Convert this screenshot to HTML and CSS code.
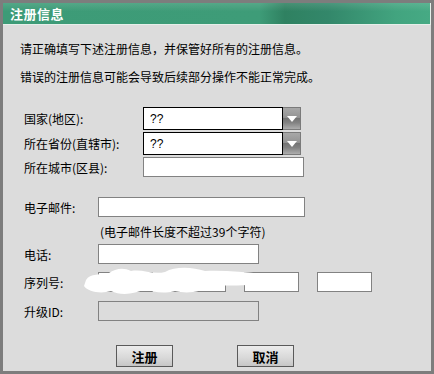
FILE: index.html
```html
<!DOCTYPE html>
<html lang="zh-CN">
<head>
    <meta charset="UTF-8">
    <title>注册信息</title>
    <link rel="stylesheet" href="styles.css">
</head>
<body>

<div class="window">
    <div class="title-bar">注册信息</div>

    <div class="content">
        <p class="intro">请正确填写下述注册信息，并保管好所有的注册信息。</p>
        <p class="intro second">错误的注册信息可能会导致后续部分操作不能正常完成。</p>

        <div class="location">
            <div class="row">
                <label class="label-wide">国家(地区):</label>
                <div class="select">
                    <span class="select-value">??</span>
                    <span class="select-btn"></span>
                </div>
            </div>
            <div class="row">
                <label class="label-wide">所在省份(直辖市):</label>
                <div class="select">
                    <span class="select-value">??</span>
                    <span class="select-btn"></span>
                </div>
            </div>
            <div class="row">
                <label class="label-wide">所在城市(区县):</label>
                <input type="text" class="field city">
            </div>
        </div>

        <div class="contact">
            <div class="row">
                <label class="label">电子邮件:</label>
                <input type="text" class="field email">
            </div>
            <p class="hint">(电子邮件长度不超过39个字符)</p>
            <div class="row phone-row">
                <label class="label">电话:</label>
                <input type="text" class="field phone">
            </div>
            <div class="row serial-row">
                <label class="label">序列号:</label>
                <div class="serial">
                    <input type="text" class="field part">
                    <input type="text" class="field part">
                    <input type="text" class="field part">
                    <input type="text" class="field part">
                    <svg class="blot" width="220" height="30" viewBox="0 0 220 30">
                        <path d="M3 13 C7 6 18 8 26 6 C32 2 40 0 48 4 C60 2 70 8 82 5 C92 -1 110 0 122 4 C140 3 160 5 180 7 C196 7 208 8 214 10 L214 16 C200 17 180 17 165 18 C150 19 138 18 128 19 C118 25 104 27 92 24 C80 27 70 25 62 22 C52 27 38 29 28 24 C18 27 5 25 1 19 Z" fill="#ffffff"/>
                    </svg>
                </div>
            </div>
            <div class="row upgrade-row">
                <label class="label">升级ID:</label>
                <input type="text" class="field upgrade" disabled>
            </div>
        </div>

        <div class="buttons">
            <button class="btn">注册</button>
            <button class="btn">取消</button>
        </div>
    </div>
</div>

</body>
</html>
```

FILE: styles.css
```css
* {
    box-sizing: border-box;
    font-family: "Noto Sans CJK SC", "DejaVu Sans", sans-serif;
}

body {
    margin: 0;
    padding: 0;
    background: #dcdcdc;
}

.window {
    width: 434px;
    height: 374px;
    border: 3px solid #7d7d7d;
    background: #dcdcdc;
}

.title-bar {
    height: 22px;
    padding-left: 7px;
    line-height: 21px;
    font-size: 13px;
    font-weight: bold;
    color: white;
    letter-spacing: 0.5px;
    border-bottom: 1px solid #e6efea;
    border-right: 1px solid #e6efea;
    background:
        linear-gradient(to bottom, rgba(255, 255, 255, 0.12), rgba(255, 255, 255, 0) 40%),
        linear-gradient(to right, #3d9b77 0%, #3e9c78 60%, #2f8161 66%, #33876a 76%, #42a47f 92%, #46aa84 100%);
}

.content {
    padding: 16px 17px 0;
}

.intro {
    margin: 0;
    font-size: 12px;
    line-height: 16px;
    color: #000;
}

.intro.second {
    margin-top: 12px;
}

.location {
    margin: 22px 0 0 4px;
    display: flex;
    flex-direction: column;
    gap: 2px;
}

.row {
    display: flex;
    align-items: center;
}

.label-wide,
.label {
    font-size: 12px;
    color: #000;
    flex-shrink: 0;
}

.label-wide {
    width: 119px;
}

.label {
    width: 74px;
}

.select {
    display: flex;
    width: 158px;
    height: 23px;
}

.select-value {
    flex: 1;
    background: white;
    border: 1px solid #000;
    font-family: "Liberation Sans", Arial, sans-serif;
    font-size: 12px;
    line-height: 21px;
    padding-left: 6px;
    padding-top: 1px;
}

.select-btn {
    width: 18px;
    position: relative;
    border: 1px solid #7a7a7a;
    border-left: none;
    background: linear-gradient(to bottom, #a8a8a8 0%, #949494 45%, #747474 50%, #828282 70%, #adadad 100%);
}

.select-btn::after {
    content: "";
    position: absolute;
    left: 4px;
    top: 8px;
    border-left: 5px solid transparent;
    border-right: 5px solid transparent;
    border-top: 6px solid white;
}

.field {
    height: 20px;
    margin: 0;
    padding: 0 3px;
    border: 1px solid #828282;
    background: white;
    font-size: 12px;
    outline: none;
}

.city {
    width: 161px;
}

.contact {
    margin: 20px 0 0 4px;
}

.email {
    width: 207px;
}

.hint {
    margin: 7px 0 0 76px;
    font-size: 12px;
    line-height: 16px;
    color: #000;
}

.phone-row {
    margin-top: 4px;
}

.phone {
    width: 161px;
}

.serial-row {
    margin-top: 8px;
}

.serial {
    position: relative;
    display: flex;
    gap: 18px;
}

.part {
    width: 55px;
}

.blot {
    position: absolute;
    left: -15px;
    top: -5px;
}

.upgrade-row {
    margin-top: 9px;
}

.upgrade {
    width: 161px;
    background: #dcdcdc;
}

.buttons {
    display: flex;
    gap: 64px;
    margin: 24px 0 0 96px;
}

.btn {
    width: 57px;
    height: 22px;
    padding: 0;
    border: 1px solid #5a5a5a;
    background: linear-gradient(to bottom, #ececec 0%, #d8d8d8 60%, #c6c6c6 100%);
    font-size: 13px;
    font-weight: bold;
    color: #000;
    cursor: pointer;
}
```
